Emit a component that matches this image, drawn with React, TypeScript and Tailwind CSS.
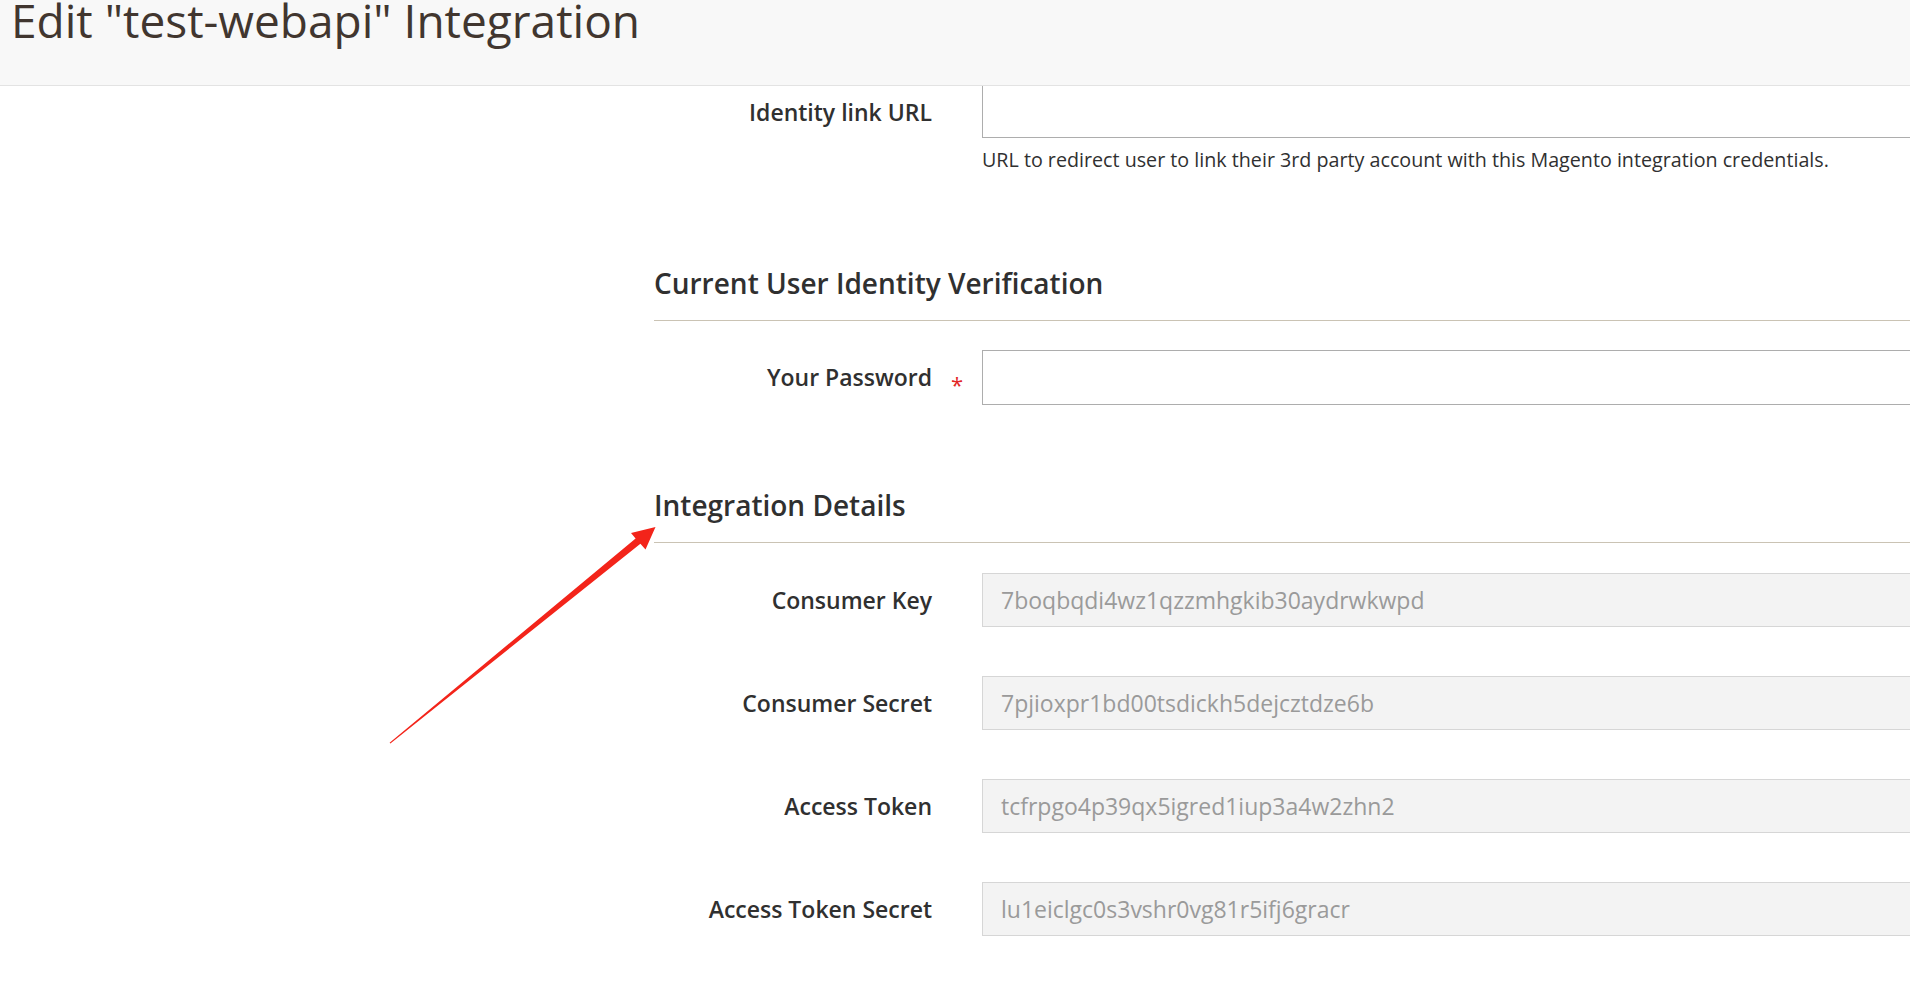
const FONT = { fontFamily: '"Open Sans", "Noto Sans", sans-serif' };

const DETAILS = [
  { label: "Consumer Key", value: "7boqbqdi4wz1qzzmhgkib30aydrwkwpd" },
  { label: "Consumer Secret", value: "7pjioxpr1bd00tsdickh5dejcztdze6b" },
  { label: "Access Token", value: "tcfrpgo4p39qx5igred1iup3a4w2zhn2" },
  { label: "Access Token Secret", value: "lu1eiclgc0s3vshr0vg81r5ifj6gracr" },
];

function Label({ text, required }: { text: string; required?: boolean }) {
  return (
    <>
      <div className="w-[932px] shrink-0 text-right text-[23px] font-semibold text-[#303030]">
        {text}
      </div>
      <div className="w-[50px] shrink-0 pl-[19px] pt-[12px] text-[22px] leading-[30px] text-[#e22626]">
        {required ? "*" : ""}
      </div>
    </>
  );
}

function Legend({ title, className }: { title: string; className?: string }) {
  return (
    <div className={"ml-[654px] border-b border-[#cac3b4] pb-[21px] " + (className ?? "")}>
      <h2 className="text-[28px] font-semibold leading-[32px] text-[#303030]">{title}</h2>
    </div>
  );
}

export default function App() {
  return (
    <div className="relative h-[1008px] w-[1910px] overflow-hidden bg-white" style={FONT}>
      {/* page header, stuck at top */}
      <header className="relative z-10 h-[86px] overflow-hidden border-b border-[#e3e3e3] bg-[#f8f8f8]">
        <h1 className="-mt-[8px] pl-[11px] text-[46px] font-normal leading-[56px] text-[#41362f]">
          Edit "test-webapi" Integration
        </h1>
      </header>

      {/* Identity link URL (top scrolled under header) */}
      <div className="flex items-center">
        <div className="flex h-[52px] items-center">
          <Label text="Identity link URL" />
        </div>
        <div className="h-[52px] w-[960px] shrink-0 border border-t-0 border-[#adadad] bg-white" />
      </div>
      <p className="ml-[982px] mt-[9px] text-[19.7px] leading-[26px] text-[#303030]">
        URL to redirect user to link their 3rd party account with this Magento integration credentials.
      </p>

      <Legend title="Current User Identity Verification" className="mt-[94px]" />

      <div className="mt-[29px] flex items-center">
        <Label text="Your Password" required />
        <div className="h-[55px] w-[960px] shrink-0 border border-[#adadad] bg-white" />
      </div>

      <Legend title="Integration Details" className="mt-[84px]" />

      <div className="mt-[30px] flex flex-col gap-[49px]">
        {DETAILS.map((d) => (
          <div key={d.label} className="flex items-center">
            <Label text={d.label} />
            <div className="flex h-[54px] w-[960px] shrink-0 items-center border border-[#d6d6d6] bg-[#f3f3f3] pl-[18px] text-[23px] text-[#9a9a9a]">
              {d.value}
            </div>
          </div>
        ))}
      </div>

      {/* red annotation arrow */}
      <svg className="pointer-events-none absolute left-0 top-0" width="1910" height="1008">
        <polygon
          points="389.6,742.8 635.6,538.6 631,533 655.5,527 645.5,549.5 640.4,543.8 390.4,743.4"
          fill="#f3241a"
        />
      </svg>
    </div>
  );
}
